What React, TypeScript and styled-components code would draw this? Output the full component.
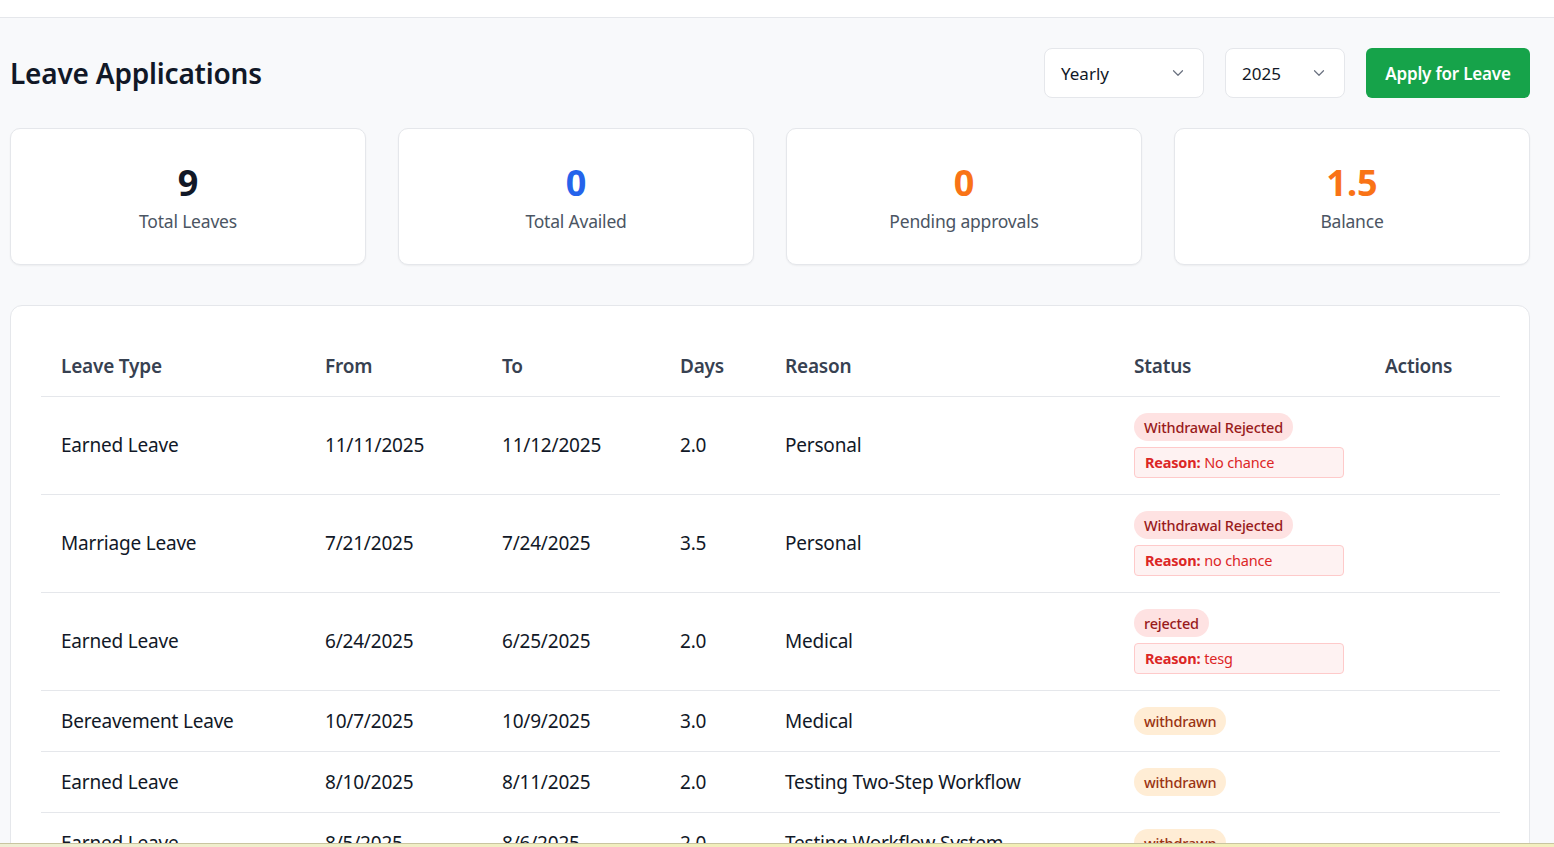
import React from "react";
import styled, { createGlobalStyle } from "styled-components";

const Global = createGlobalStyle`
  html, body { margin: 0; padding: 0; }
  body {
    background: #f8f9fb;
    font-family: "Noto Sans", "Open Sans", sans-serif;
    color: #111827;
    overflow: hidden;
  }
  * { box-sizing: border-box; }
`;

const TopBar = styled.div`
  height: 18px;
  background: #ffffff;
  border-bottom: 1px solid #e5e7eb;
`;

const Main = styled.main`
  padding: 30px 24px 0 10px;
  display: flex;
  flex-direction: column;
  gap: 30px;
`;

const Header = styled.div`
  display: flex;
  align-items: center;
  justify-content: space-between;
  height: 50px;
`;

const Title = styled.h1`
  margin: 0;
  font-size: 28px;
  font-weight: 600;
  color: #111827;
  letter-spacing: -0.2px;
`;

const Controls = styled.div`
  display: flex;
  gap: 21px;
  align-items: center;
`;

const Select = styled.div<{ $w: number }>`
  width: ${(p) => p.$w}px;
  height: 50px;
  background: #fff;
  border: 1px solid #e5e7eb;
  border-radius: 8px;
  display: flex;
  align-items: center;
  justify-content: space-between;
  padding: 0 16px 0 16px;
  font-size: 17px;
  color: #111827;
`;

const Button = styled.button`
  height: 50px;
  width: 164px;
  background: #16a34a;
  color: #fff;
  border: none;
  border-radius: 6px;
  font-family: inherit;
  font-size: 17px;
  font-weight: 600;
  letter-spacing: -0.2px;
`;

const Stats = styled.div`
  display: grid;
  grid-template-columns: repeat(4, 1fr);
  gap: 32px;
`;

const StatCard = styled.div`
  height: 137px;
  background: #fff;
  border: 1px solid #e5e7eb;
  border-radius: 10px;
  box-shadow: 0 1px 2px rgba(0, 0, 0, 0.05);
  display: flex;
  flex-direction: column;
  align-items: center;
  justify-content: center;
  gap: 4px;
`;

const StatValue = styled.div<{ $c: string }>`
  font-size: 36px;
  font-weight: 700;
  line-height: 44px;
  color: ${(p) => p.$c};
`;

const StatLabel = styled.div`
  font-size: 17.5px;
  color: #4b5563;
  letter-spacing: -0.2px;
`;

const TableCard = styled.div`
  margin-top: 10px;
  background: #fff;
  border: 1px solid #e5e7eb;
  border-radius: 12px;
  padding: 30px 30px 0 30px;
  height: 600px;
`;

const Table = styled.table`
  width: 100%;
  border-collapse: collapse;
  table-layout: fixed;
`;

const Th = styled.th`
  text-align: left;
  padding: 0 20px;
  height: 60px;
  font-size: 19px;
  font-weight: 600;
  color: #374151;
  border-bottom: 1px solid #e5e7eb;
  letter-spacing: -0.2px;
`;

const Td = styled.td`
  padding: 16px 20px;
  height: 60px;
  font-size: 19px;
  color: #111827;
  border-bottom: 1px solid #e5e7eb;
  vertical-align: middle;
  letter-spacing: -0.2px;
`;

const StatusCell = styled.div`
  display: flex;
  flex-direction: column;
  align-items: flex-start;
  gap: 6px;
`;

const Badge = styled.span<{ $kind: "red" | "orange" }>`
  display: inline-flex;
  align-items: center;
  height: 28px;
  padding: 0 10px;
  border-radius: 999px;
  font-size: 14.5px;
  font-weight: 500;
  background: ${(p) => (p.$kind === "red" ? "#fee2e2" : "#ffedd5")};
  color: ${(p) => (p.$kind === "red" ? "#991b1b" : "#9a3412")};
`;

const ReasonBox = styled.div`
  width: 210px;
  height: 31px;
  display: flex;
  align-items: center;
  padding: 0 10px;
  background: #fef2f2;
  border: 1px solid #fecaca;
  border-radius: 4px;
  font-size: 14.5px;
  color: #dc2626;
  b { font-weight: 700; margin-right: 4px; }
`;

const BottomStrip = styled.div`
  position: fixed;
  left: 0;
  right: 0;
  bottom: 0;
  height: 4px;
  border-top: 1px solid #c9c5a0;
  background: linear-gradient(90deg, #efeed4, #f2eeb4 60%, #f3efc0);
`;

const Chevron = () => (
  <svg width="18" height="18" viewBox="0 0 24 24" fill="none" stroke="#6b7280" strokeWidth="1.6" strokeLinecap="round" strokeLinejoin="round">
    <path d="M6 9l6 6 6-6" />
  </svg>
);

type Row = {
  type: string;
  from: string;
  to: string;
  days: string;
  reason: string;
  status: string;
  kind: "red" | "orange";
  note?: string;
};

const rows: Row[] = [
  { type: "Earned Leave", from: "11/11/2025", to: "11/12/2025", days: "2.0", reason: "Personal", status: "Withdrawal Rejected", kind: "red", note: "No chance" },
  { type: "Marriage Leave", from: "7/21/2025", to: "7/24/2025", days: "3.5", reason: "Personal", status: "Withdrawal Rejected", kind: "red", note: "no chance" },
  { type: "Earned Leave", from: "6/24/2025", to: "6/25/2025", days: "2.0", reason: "Medical", status: "rejected", kind: "red", note: "tesg" },
  { type: "Bereavement Leave", from: "10/7/2025", to: "10/9/2025", days: "3.0", reason: "Medical", status: "withdrawn", kind: "orange" },
  { type: "Earned Leave", from: "8/10/2025", to: "8/11/2025", days: "2.0", reason: "Testing Two-Step Workflow", status: "withdrawn", kind: "orange" },
  { type: "Earned Leave", from: "8/5/2025", to: "8/6/2025", days: "2.0", reason: "Testing Workflow System", status: "withdrawn", kind: "orange" },
];

const stats = [
  { v: "9", l: "Total Leaves", c: "#111827" },
  { v: "0", l: "Total Availed", c: "#2563eb" },
  { v: "0", l: "Pending approvals", c: "#f97316" },
  { v: "1.5", l: "Balance", c: "#f97316" },
];

export default function App() {
  return (
    <>
      <Global />
      <TopBar />
      <Main>
        <Header>
          <Title>Leave Applications</Title>
          <Controls>
            <Select $w={160}>
              <span>Yearly</span>
              <Chevron />
            </Select>
            <Select $w={120}>
              <span>2025</span>
              <Chevron />
            </Select>
            <Button>Apply for Leave</Button>
          </Controls>
        </Header>
        <Stats>
          {stats.map((s) => (
            <StatCard key={s.l}>
              <StatValue $c={s.c}>{s.v}</StatValue>
              <StatLabel>{s.l}</StatLabel>
            </StatCard>
          ))}
        </Stats>
        <TableCard>
          <Table>
            <colgroup>
              <col style={{ width: 264 }} />
              <col style={{ width: 177 }} />
              <col style={{ width: 178 }} />
              <col style={{ width: 105 }} />
              <col style={{ width: 349 }} />
              <col style={{ width: 251 }} />
              <col style={{ width: 135 }} />
            </colgroup>
            <thead>
              <tr>
                <Th>Leave Type</Th>
                <Th>From</Th>
                <Th>To</Th>
                <Th>Days</Th>
                <Th>Reason</Th>
                <Th>Status</Th>
                <Th>Actions</Th>
              </tr>
            </thead>
            <tbody>
              {rows.map((r, i) => (
                <tr key={i}>
                  <Td>{r.type}</Td>
                  <Td>{r.from}</Td>
                  <Td>{r.to}</Td>
                  <Td>{r.days}</Td>
                  <Td>{r.reason}</Td>
                  <Td>
                    <StatusCell>
                      <Badge $kind={r.kind}>{r.status}</Badge>
                      {r.note && (
                        <ReasonBox>
                          <b>Reason:</b>
                          {r.note}
                        </ReasonBox>
                      )}
                    </StatusCell>
                  </Td>
                  <Td />
                </tr>
              ))}
            </tbody>
          </Table>
        </TableCard>
      </Main>
      <BottomStrip />
    </>
  );
}
